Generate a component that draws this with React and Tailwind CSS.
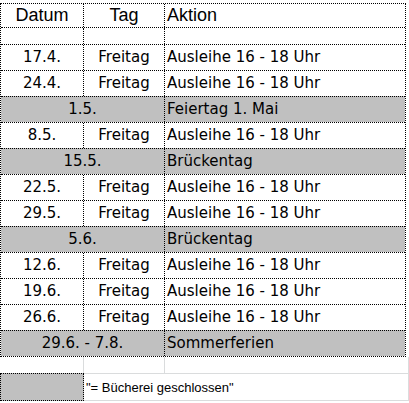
const rows = [
  { datum: '17.4.', tag: 'Freitag', aktion: 'Ausleihe 16 - 18 Uhr' },
  { datum: '24.4.', tag: 'Freitag', aktion: 'Ausleihe 16 - 18 Uhr' },
  { datum: '1.5.', aktion: 'Feiertag 1. Mai', closed: true },
  { datum: '8.5.', tag: 'Freitag', aktion: 'Ausleihe 16 - 18 Uhr' },
  { datum: '15.5.', aktion: 'Brückentag', closed: true },
  { datum: '22.5.', tag: 'Freitag', aktion: 'Ausleihe 16 - 18 Uhr' },
  { datum: '29.5.', tag: 'Freitag', aktion: 'Ausleihe 16 - 18 Uhr' },
  { datum: '5.6.', aktion: 'Brückentag', closed: true },
  { datum: '12.6.', tag: 'Freitag', aktion: 'Ausleihe 16 - 18 Uhr' },
  { datum: '19.6.', tag: 'Freitag', aktion: 'Ausleihe 16 - 18 Uhr' },
  { datum: '26.6.', tag: 'Freitag', aktion: 'Ausleihe 16 - 18 Uhr' },
  { datum: '29.6. - 7.8.', aktion: 'Sommerferien', closed: true },
]

function Row({ row }) {
  if (row.closed) {
    return (
      <div className="flex h-[26px] border-t border-dotted border-black bg-[#c0c0c0]">
        <div className="w-[164px] border-r border-dotted border-black flex items-center justify-center">
          {row.datum}
        </div>
        <div className="w-[240px] flex items-center pl-[2px]">{row.aktion}</div>
      </div>
    )
  }
  return (
    <div className="flex h-[26px] border-t border-dotted border-black">
      <div className="w-[83px] border-r border-dotted border-black flex items-center justify-center">
        {row.datum}
      </div>
      <div className="w-[81px] border-r border-dotted border-black flex items-center justify-center">
        {row.tag}
      </div>
      <div className="w-[240px] flex items-center pl-[2px]">{row.aktion}</div>
    </div>
  )
}

export default function App() {
  return (
    <div className="w-[409px] h-[403px] bg-white overflow-hidden text-black">
      <div className="mt-[3px] w-[406px] border border-dotted border-black font-['DejaVu_Sans',sans-serif] text-[15px]">
        <div className="flex h-[23px] font-['Liberation_Sans',Arial,sans-serif] text-[18px]">
          <div className="w-[83px] border-r border-dotted border-black flex items-center justify-center">
            Datum
          </div>
          <div className="w-[81px] border-r border-dotted border-black flex items-center justify-center">
            Tag
          </div>
          <div className="w-[240px] flex items-center pl-[2px]">Aktion</div>
        </div>
        <div className="flex h-[17px] border-t border-dotted border-black">
          <div className="w-[83px] border-r border-dotted border-black" />
          <div className="w-[81px] border-r border-dotted border-black" />
          <div className="w-[240px]" />
        </div>
        {rows.map(row => (
          <Row key={row.datum} row={row} />
        ))}
      </div>

      <div className="flex h-[17px]">
        <div className="w-[84px] border-r border-b border-[#dadcdd]" />
        <div className="w-[81px] border-r border-b border-[#dadcdd]" />
        <div className="w-[244px] border-r border-b border-[#dadcdd]" />
      </div>
      <div className="flex h-[27px] font-['Liberation_Sans',Arial,sans-serif] text-[13px]">
        <div className="w-[84px] h-[28px] -mt-px border border-dotted border-black bg-[#c0c0c0]" />
        <div className="w-[325px] border-r border-b border-[#dadcdd] flex items-end pl-[2px] pb-[3px] whitespace-nowrap">
          "= Bücherei geschlossen"
        </div>
      </div>
    </div>
  )
}
